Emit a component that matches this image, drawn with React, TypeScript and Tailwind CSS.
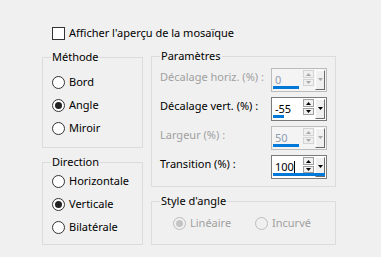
import React from "react";

const font = { fontFamily: '"Noto Sans", "Open Sans", sans-serif' };

function Radio({ label, checked = false, disabled = false, className = "" }: { label: string; checked?: boolean; disabled?: boolean; className?: string }) {
  return (
    <div className={`flex items-center h-[16px] ${className}`}>
      <span
        className={`flex shrink-0 items-center justify-center w-[13px] h-[13px] rounded-full border ${
          disabled ? "border-[#bcbcbc] bg-[#f0f0f0]" : "border-[#333333] bg-white"
        }`}
      >
        {checked && <span className={`w-[7px] h-[7px] rounded-full ${disabled ? "bg-[#c4c4c4]" : "bg-[#222222]"}`} />}
      </span>
      <span className={`ml-[4px] whitespace-nowrap ${disabled ? "text-[#a0a0a0]" : "text-black"}`}>{label}</span>
    </div>
  );
}

function Group({ title, className, children }: { title: string; className: string; children: React.ReactNode }) {
  return (
    <div className={`relative border border-[#dcdcdc] ${className}`}>
      <span className="absolute -top-[9px] left-[8px] px-[1px] bg-[#f0f0f0] leading-4 text-black whitespace-nowrap">{title}</span>
      {children}
    </div>
  );
}

function Arrow({ up = false, disabled = false }: { up?: boolean; disabled?: boolean }) {
  const c = disabled ? "#a8a8a8" : "#000000";
  return (
    <svg width="5" height="3" viewBox="0 0 5 3">
      <path d={up ? "M2.5 0 L5 3 L0 3 Z" : "M0 0 L5 0 L2.5 3 Z"} fill={c} />
    </svg>
  );
}

function Spin({ value, fill, disabled = false, caret = false }: { value: string; fill: number; disabled?: boolean; caret?: boolean }) {
  const btn = disabled ? "border-[#d4d4d4]" : "border-[#a0a0a0]";
  return (
    <div
      className={`relative flex shrink-0 w-[56px] h-[24px] border ${
        disabled ? "border-[#bcbcbc] bg-[#f4f4f4]" : "border-[#7a7a7a] bg-white"
      }`}
    >
      <div className="w-[31px] pl-[3px] pt-[3px] leading-4 whitespace-nowrap">
        <span className={disabled ? "text-[#8e9cb0]" : "text-black"}>{value}</span>
        {caret && <span className="inline-block w-[1px] h-[13px] bg-black align-middle -mt-[2px]" />}
      </div>
      <div className="flex flex-col gap-[1px] mt-[1px] w-[11px]">
        <div className={`flex items-center justify-center h-[8px] border ${btn} bg-[#f0f0f0]`}>
          <Arrow up disabled={disabled} />
        </div>
        <div className={`flex items-center justify-center h-[7px] border ${btn} bg-[#f0f0f0]`}>
          <Arrow disabled={disabled} />
        </div>
      </div>
      <div className="ml-[1px] my-[1px] w-[10px] flex justify-center pt-[7px] bg-[#f0f0f0] border border-t-white border-l-white border-r-[#696969] border-b-[#696969]">
        <Arrow disabled={disabled} />
      </div>
      <div className="absolute left-[1px] bottom-[2px] h-[3px] bg-[#0078d7]" style={{ width: `${fill}px` }} />
    </div>
  );
}

function Row({ label, disabled = false, children }: { label: string; disabled?: boolean; children: React.ReactNode }) {
  return (
    <div className="flex items-start justify-between h-[24px]">
      <span className={`mt-[1px] leading-4 whitespace-nowrap ${disabled ? "text-[#a0a0a0]" : "text-black"}`}>{label}</span>
      {children}
    </div>
  );
}

export default function App() {
  return (
    <div className="w-[381px] h-[257px] bg-[#f0f0f0] pt-[25px] pl-[42px] text-[11px] text-black" style={font}>
      <div className="flex items-center ml-[10px] h-[16px]">
        <span className="w-[13px] h-[13px] border border-[#333333] bg-white" />
        <span className="ml-[4px]">Afficher l'aperçu de la mosaïque</span>
      </div>
      <div className="flex mt-[15px]">
        <div className="flex flex-col w-[101px] mt-[1px]">
          <Group title="Méthode" className="h-[91px] pl-[9px] pt-[16px] flex flex-col gap-[7px]">
            <Radio label="Bord" />
            <Radio label="Angle" checked />
            <Radio label="Miroir" />
          </Group>
          <Group title="Direction" className="mt-[14px] h-[83px] pl-[9px] pt-[10px] flex flex-col gap-[7px]">
            <Radio label="Horizontale" />
            <Radio label="Verticale" checked />
            <Radio label="Bilatérale" />
          </Group>
        </div>
        <div className="flex flex-col w-[185px] ml-[8px]">
          <Group title="Paramètres" className="h-[131px] pl-[8px] pr-[8px] pt-[11px] flex flex-col gap-[5px]">
            <Row label="Décalage horiz. (%) :" disabled>
              <Spin value="0" fill={26} disabled />
            </Row>
            <Row label="Décalage vert. (%) :">
              <Spin value="-55" fill={11} />
            </Row>
            <Row label="Largeur (%) :" disabled>
              <Spin value="50" fill={26} disabled />
            </Row>
            <Row label="Transition (%) :">
              <Spin value="100" fill={52} caret />
            </Row>
          </Group>
          <Group title="Style d'angle" className="mt-[14px] h-[44px] pl-[21px] pt-[13px] flex">
            <Radio label="Linéaire" checked disabled className="w-[82px]" />
            <Radio label="Incurvé" disabled />
          </Group>
        </div>
      </div>
    </div>
  );
}
